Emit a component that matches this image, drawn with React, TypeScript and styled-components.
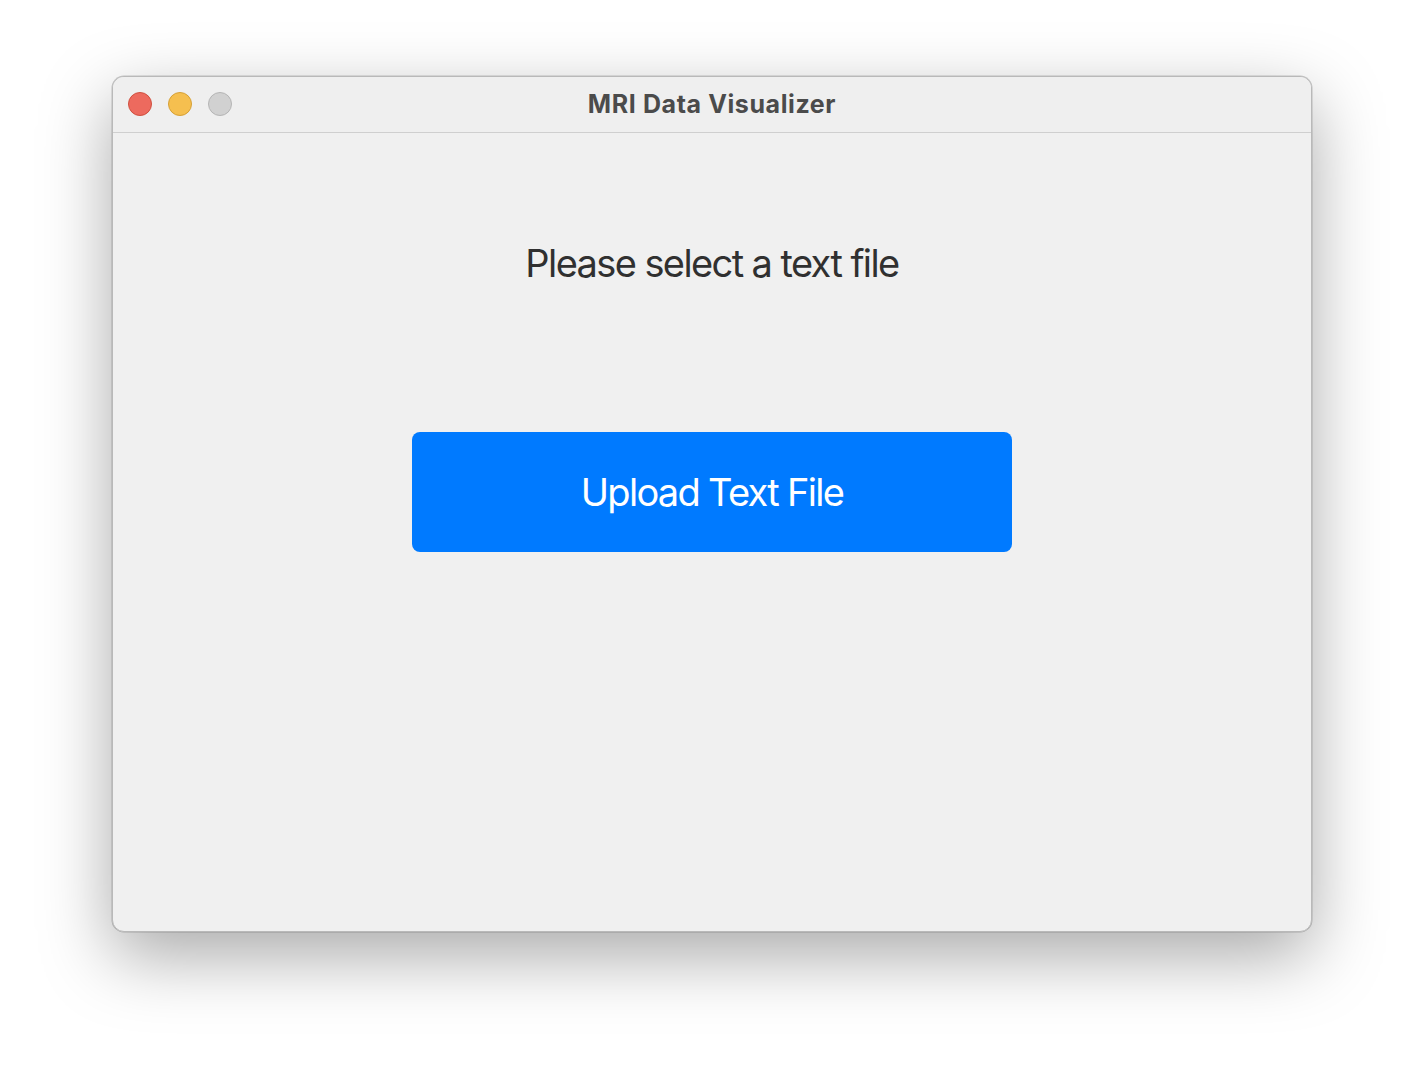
import React from "react";
import styled, { createGlobalStyle } from "styled-components";

const Global = createGlobalStyle`
  html, body { margin: 0; padding: 0; background: #ffffff; }
  body { font-family: Inter, "Noto Sans", sans-serif; }
`;

const Page = styled.div`
  display: flex;
  justify-content: center;
  padding-top: 76px;
  height: 1080px;
  box-sizing: border-box;
`;

const Window = styled.div`
  width: 1200px;
  height: 856px;
  box-sizing: border-box;
  background: #f0f0f0;
  border-radius: 12px;
  border: 1px solid #b9b9b9;
  box-shadow: 0 24px 70px rgba(0, 0, 0, 0.34), 0 0 0 0.5px rgba(0, 0, 0, 0.2);
  display: flex;
  flex-direction: column;
  overflow: hidden;
`;

const TitleBar = styled.div`
  position: relative;
  height: 56px;
  flex: none;
  box-sizing: border-box;
  border-bottom: 1px solid #cfcfcf;
  background: #efefef;
  display: flex;
  align-items: center;
  justify-content: center;
  padding-bottom: 2px;
`;

const Lights = styled.div`
  position: absolute;
  left: 15px;
  top: 15px;
  display: flex;
  gap: 16px;
`;

const Light = styled.span<{ $fill: string; $stroke: string }>`
  width: 24px;
  height: 24px;
  border-radius: 50%;
  box-sizing: border-box;
  background: ${(p) => p.$fill};
  border: 1px solid ${(p) => p.$stroke};
`;

const Title = styled.div`
  font-size: 25px;
  font-weight: 700;
  color: #4b4b4b;
  letter-spacing: 0.6px;
`;

const Content = styled.div`
  flex: 1;
  display: flex;
  flex-direction: column;
  align-items: center;
  padding-top: 107px;
`;

const Prompt = styled.div`
  font-size: 38px;
  line-height: 46px;
  color: #303030;
  letter-spacing: -1.6px;
`;

const UploadButton = styled.button`
  margin-top: 146px;
  width: 600px;
  height: 120px;
  border: none;
  border-radius: 8px;
  background: #007aff;
  color: #ffffff;
  font-family: Inter, "Noto Sans", sans-serif;
  font-size: 38px;
  letter-spacing: -1.7px;
  cursor: pointer;
`;

export default function App() {
  return (
    <>
      <Global />
      <Page>
        <Window>
          <TitleBar>
            <Lights>
              <Light $fill="#ed6a5e" $stroke="#d0503f" />
              <Light $fill="#f5bf4f" $stroke="#d6a036" />
              <Light $fill="#d1d1d1" $stroke="#b5b5b5" />
            </Lights>
            <Title>MRI Data Visualizer</Title>
          </TitleBar>
          <Content>
            <Prompt>Please select a text file</Prompt>
            <UploadButton>Upload Text File</UploadButton>
          </Content>
        </Window>
      </Page>
    </>
  );
}
